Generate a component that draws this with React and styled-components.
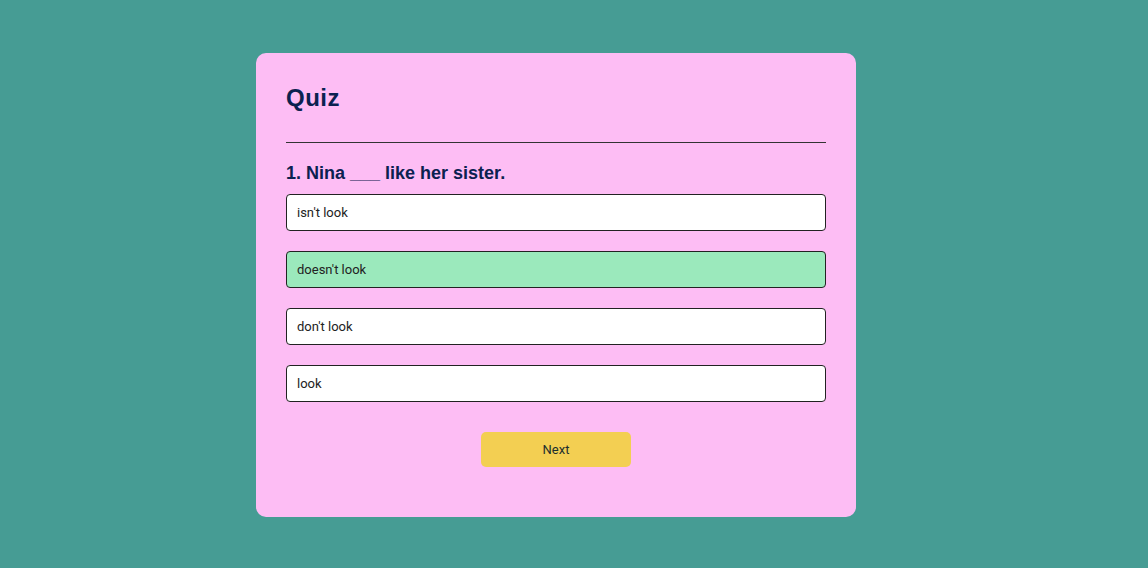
import React, { useState } from 'react';
import styled, { createGlobalStyle } from 'styled-components';

const GlobalStyle = createGlobalStyle`
    html, body {
        margin: 0;
        padding: 0;
        background-color: #469c94;
        font-family: "Liberation Sans", Arial, sans-serif;
    }
`;

const Page = styled.div`
    min-height: 568px;
    display: flex;
    justify-content: center;
    align-items: flex-start;
    padding: 53px 36px 0 0;
    box-sizing: border-box;
`;

const Card = styled.div`
    width: 600px;
    box-sizing: border-box;
    background-color: #fdbdf4;
    border-radius: 10px;
    padding: 31px 30px 50px;
    display: flex;
    flex-direction: column;
`;

const Title = styled.h1`
    margin: 0;
    font-size: 24px;
    line-height: 28px;
    font-weight: bold;
    letter-spacing: 0.5px;
    color: #0b2150;
`;

const Divider = styled.hr`
    margin: 30px 0 20px;
    border: none;
    border-top: 1px solid #333;
    height: 0;
`;

const Question = styled.h2`
    margin: 0 0 10px;
    font-size: 18px;
    line-height: 21px;
    font-weight: bold;
    color: #0b2150;
`;

const Options = styled.div`
    display: flex;
    flex-direction: column;
    gap: 20px;
`;

const Option = styled.button`
    height: 37px;
    box-sizing: border-box;
    border: 1px solid #222;
    border-radius: 4px;
    padding: 0 10px;
    text-align: left;
    font-family: Roboto, "Liberation Sans", sans-serif;
    font-size: 13px;
    color: #222;
    background-color: ${(p) => (p.$correct ? '#9be9bc' : '#ffffff')};
    cursor: pointer;
`;

const NextButton = styled.button`
    align-self: center;
    margin-top: 30px;
    width: 150px;
    height: 35px;
    border: none;
    border-radius: 5px;
    background-color: #f3cf52;
    font-family: Roboto, "Liberation Sans", sans-serif;
    font-size: 13px;
    color: #1c2e2e;
    cursor: pointer;
`;

const answers = ["isn't look", "doesn't look", "don't look", 'look'];

export default function App() {
    const [picked] = useState(1);

    return (
        <>
            <GlobalStyle />
            <Page>
                <Card>
                    <Title>Quiz</Title>
                    <Divider />
                    <Question>1. Nina ___ like her sister.</Question>
                    <Options>
                        {answers.map((a, i) => (
                            <Option key={a} $correct={i === picked}>{a}</Option>
                        ))}
                    </Options>
                    <NextButton>Next</NextButton>
                </Card>
            </Page>
        </>
    );
}
